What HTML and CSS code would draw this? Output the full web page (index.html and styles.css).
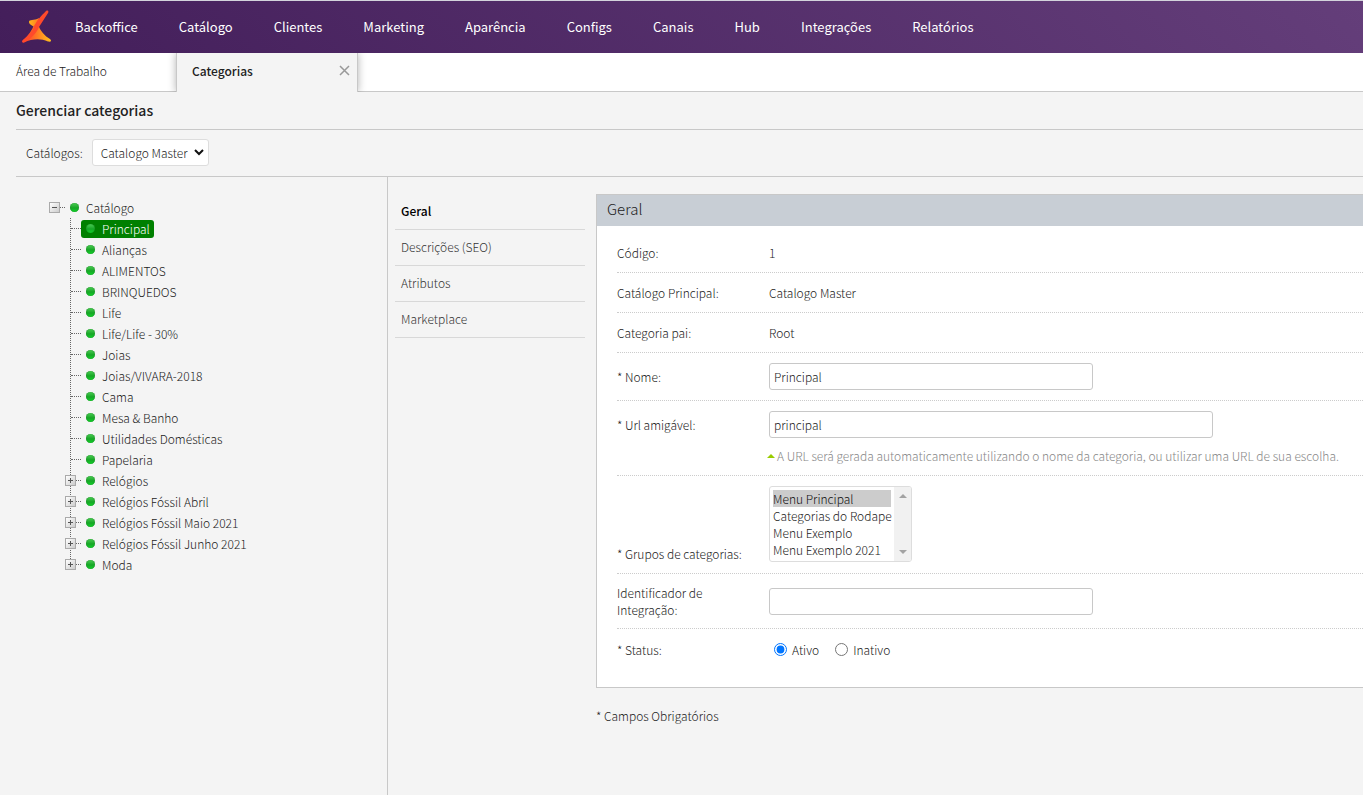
FILE: index.html
```
<!DOCTYPE html>
<html lang="pt-BR">
<head>
  <meta charset="UTF-8" />
  <meta name="viewport" content="width=device-width, initial-scale=1" />
  <title>Gerenciar categorias</title>
  <link rel="stylesheet" href="styles.css">
</head>
<body>
  <header class="topbar">
    <a href="#" class="logo" aria-label="Início">
      <svg width="30" height="34" viewBox="0 0 30 34" xmlns="http://www.w3.org/2000/svg">
        <defs>
          <linearGradient id="gBase" x1="0" y1="0" x2="1" y2="0">
            <stop offset="0" stop-color="#ff2f2f" />
            <stop offset="0.4" stop-color="#ff6a26" />
            <stop offset="1" stop-color="#ffc21c" />
          </linearGradient>
          <linearGradient id="gTop" x1="0" y1="0" x2="1" y2="0">
            <stop offset="0" stop-color="#ffb41c" />
            <stop offset="1" stop-color="#ff7a22" />
          </linearGradient>
        </defs>
        <path d="M7 12C7 9 12 11 17 8L15 19C12 16 7 15 7 12Z" fill="url(#gTop)" />
        <path d="M16 14C18 21 23 26 28 29C30 31 29 32 26 31.500C18 28 10 29 2 32.500C0 33 0 31 1 30C7 25 10 20 12 15Z" fill="url(#gBase)" />
        <path d="M24 1C26 0 27 1 26 3L17 17C15 22 10 28 2 32.500C0 33 -0.500 31 1 30C8 25 10 21 12 17C14 11 19 6 24 1Z" fill="#ff4a2b" />
      </svg>
    </a>
    <nav class="menu">
      <a href="#">Backoffice</a>
      <a href="#">Catálogo</a>
      <a href="#">Clientes</a>
      <a href="#">Marketing</a>
      <a href="#">Aparência</a>
      <a href="#">Configs</a>
      <a href="#">Canais</a>
      <a href="#">Hub</a>
      <a href="#">Integrações</a>
      <a href="#">Relatórios</a>
    </nav>
  </header>

  <div class="tabs">
    <a href="#" class="tab">Área de Trabalho</a>
    <div class="tab active">
      <a href="#">Categorias</a>
      <button type="button" class="tab-close" aria-label="Fechar">
        <svg width="11" height="11" viewBox="0 0 11 11"><path d="M1 1L10 10M10 1L1 10" /></svg>
      </button>
    </div>
  </div>

  <main class="page">
    <h1>Gerenciar categorias</h1>

    <div class="filter">
      <label for="catalogo">Catálogos:</label>
      <span class="select-wrap">
        <select id="catalogo">
          <option>Catalogo Master</option>
        </select>
        <svg class="chevron" width="10" height="7" viewBox="0 0 10 7"><path d="M1 1L5 5L9 1" /></svg>
      </span>
    </div>

    <div class="content">
      <aside class="sidebar">
        <div class="root">
          <button type="button" class="toggle minus" aria-label="Recolher"></button>
          <a href="#" class="node">Catálogo</a>
        </div>
        <ul class="tree">
          <li><a href="#" class="node selected">Principal</a></li>
          <li><a href="#" class="node">Alianças</a></li>
          <li><a href="#" class="node">ALIMENTOS</a></li>
          <li><a href="#" class="node">BRINQUEDOS</a></li>
          <li><a href="#" class="node">Life</a></li>
          <li><a href="#" class="node">Life/Life - 30%</a></li>
          <li><a href="#" class="node">Joias</a></li>
          <li><a href="#" class="node">Joias/VIVARA-2018</a></li>
          <li><a href="#" class="node">Cama</a></li>
          <li><a href="#" class="node">Mesa &amp; Banho</a></li>
          <li><a href="#" class="node">Utilidades Domésticas</a></li>
          <li><a href="#" class="node">Papelaria</a></li>
          <li><button type="button" class="toggle" aria-label="Expandir"></button><a href="#" class="node">Relógios</a></li>
          <li><button type="button" class="toggle" aria-label="Expandir"></button><a href="#" class="node">Relógios Fóssil Abril</a></li>
          <li><button type="button" class="toggle" aria-label="Expandir"></button><a href="#" class="node">Relógios Fóssil Maio 2021</a></li>
          <li><button type="button" class="toggle" aria-label="Expandir"></button><a href="#" class="node">Relógios Fóssil Junho 2021</a></li>
          <li><button type="button" class="toggle" aria-label="Expandir"></button><a href="#" class="node">Moda</a></li>
        </ul>
      </aside>

      <nav class="subnav">
        <a href="#" class="current">Geral</a>
        <a href="#">Descrições (SEO)</a>
        <a href="#">Atributos</a>
        <a href="#">Marketplace</a>
      </nav>

      <form class="form">
        <section class="panel">
          <h2>Geral</h2>
          <div class="rows">
            <div class="row">
              <span class="label">Código:</span>
              <span>1</span>
            </div>
            <div class="row">
              <span class="label">Catálogo Principal:</span>
              <span>Catalogo Master</span>
            </div>
            <div class="row">
              <span class="label">Categoria pai:</span>
              <span>Root</span>
            </div>
            <div class="row">
              <label class="label" for="nome">* Nome:</label>
              <input type="text" id="nome" class="text" value="Principal">
            </div>
            <div class="row top">
              <label class="label tall" for="url">* Url amigável:</label>
              <div>
                <input type="text" id="url" class="text wide" value="principal">
                <p class="hint">A URL será gerada automaticamente utilizando o nome da categoria, ou utilizar uma URL de sua escolha.</p>
              </div>
            </div>
            <div class="row bottom">
              <label class="label" for="grupos">* Grupos de categorias:</label>
              <span class="listbox-wrap">
                <select id="grupos" class="listbox" size="4" multiple>
                  <option selected>Menu Principal</option>
                  <option>Categorias do Rodape</option>
                  <option>Menu Exemplo</option>
                  <option>Menu Exemplo 2021</option>
                </select>
                <span class="scrollbar">
                  <svg width="8" height="4" viewBox="0 0 8 4"><path d="M0 4L4 0L8 4Z" /></svg>
                  <svg width="8" height="4" viewBox="0 0 8 4"><path d="M0 0L4 4L8 0Z" /></svg>
                </span>
              </span>
            </div>
            <div class="row">
              <label class="label" for="identificador">Identificador de Integração:</label>
              <input type="text" id="identificador" class="text">
            </div>
            <div class="row" role="radiogroup" aria-labelledby="statusLabel">
              <span class="label" id="statusLabel">* Status:</span>
              <div class="radios">
                <label><input type="radio" name="status" checked>Ativo</label>
                <label><input type="radio" name="status">Inativo</label>
              </div>
            </div>
          </div>
        </section>
        <p class="required">* Campos Obrigatórios</p>
      </form>
    </div>
  </main>
</body>
</html>
```
FILE: styles.css
```
* {
  box-sizing: border-box;
}
body {
  margin: 0;
  min-height: 100vh;
  display: flex;
  flex-direction: column;
  background-color: #f4f4f4;
  color: #222;
  font-family: "Noto Sans CJK SC", "Noto Sans", sans-serif;
  font-size: 12px;
  font-weight: 300;
  line-height: 17px;
}
a {
  color: inherit;
  text-decoration: none;
}
button,
input,
select {
  font: inherit;
  color: inherit;
}
h1,
h2,
p,
ul {
  margin: 0;
  padding: 0;
}

/* Top menu */
.topbar {
  display: flex;
  align-items: center;
  height: 53px;
  padding-left: 22px;
  border-top: 1px solid #d3d3dc;
  background: linear-gradient(45deg, #431e5a, #643e7a);
}
.logo {
  display: flex;
  margin-right: 23px;
}
.menu {
  display: flex;
  gap: 41px;
  padding-bottom: 2px;
  color: #fff;
  font-size: 13px;
  font-weight: 400;
}

/* Tabs */
.tabs {
  display: flex;
  height: 39px;
  background-color: #fff;
  border-bottom: 1px solid #c8c8c8;
}
.tab {
  display: flex;
  align-items: center;
  width: 176px;
  padding: 0 16px 3px;
}
.tab.active {
  width: 182px;
  height: 39px;
  padding: 0 7px 4px 15px;
  justify-content: space-between;
  background-color: #f4f4f4;
  border: solid #c8c8c8;
  border-width: 0 1px;
  box-shadow: 0 0 8px rgba(0, 0, 0, 0.3);
  clip-path: inset(0 -10px 0 -10px);
  font-weight: 500;
}
.tab-close {
  display: flex;
  padding: 0;
  border: 0;
  background: none;
  cursor: pointer;
}
.tab-close path {
  fill: none;
  stroke: #999;
  stroke-width: 1.5;
}

/* Page */
.page {
  flex: 1;
  display: flex;
  flex-direction: column;
  padding-left: 16px;
}
h1 {
  padding: 9px 0 10px;
  border-bottom: 1px solid #c8c8c8;
  font-size: 14px;
  font-weight: 500;
  line-height: 18px;
}
.filter {
  display: flex;
  align-items: center;
  gap: 9px;
  padding: 9px 10px 10px;
  border-bottom: 1px solid #c8c8c8;
}
.select-wrap {
  position: relative;
}
.select-wrap select {
  display: block;
  height: 27px;
  padding: 0 20px 0 8px;
  appearance: none;
  border: 1px solid #ddd;
  border-radius: 3px;
  background-color: #fff;
}
.chevron {
  position: absolute;
  top: 10px;
  right: 5px;
  pointer-events: none;
}
.chevron path {
  fill: none;
  stroke: #111;
  stroke-width: 2;
}
.content {
  flex: 1;
  display: flex;
}

/* Category tree */
.sidebar {
  flex: none;
  width: 372px;
  padding: 20px 0 0 33px;
  border-right: 1px solid #c8c8c8;
}
.root,
.tree li {
  display: flex;
  align-items: center;
  height: 21px;
}
.root::after {
  content: "";
  order: 1;
  width: 5px;
  border-top: 1px dotted #666;
}
.root .node {
  order: 2;
}
.tree {
  position: relative;
  padding-left: 16px;
  list-style: none;
}
.tree::before {
  content: "";
  position: absolute;
  top: 0;
  bottom: 10px;
  left: 21px;
  border-left: 1px dotted #666;
}
.tree li::before {
  content: "";
  width: 10px;
  margin-left: 6px;
  border-top: 1px dotted #666;
}
.tree li:has(.toggle)::before {
  order: 1;
  width: 5px;
  margin-left: 0;
}
.tree li .node {
  order: 2;
}
.toggle {
  position: relative;
  width: 11px;
  height: 11px;
  padding: 0;
  border: 1px solid #aaa;
  background:
    linear-gradient(#555, #555) center / 5px 1px no-repeat,
    linear-gradient(#555, #555) center / 1px 5px no-repeat,
    linear-gradient(135deg, #fff, #ccc);
}
.toggle.minus {
  background:
    linear-gradient(#555, #555) center / 5px 1px no-repeat,
    linear-gradient(135deg, #fff, #ccc);
}
.node {
  display: flex;
  align-items: center;
  gap: 7px;
  height: 18px;
  padding: 0 4px 1px 5px;
  border-radius: 3px;
}
.node::before {
  content: "";
  width: 9px;
  height: 9px;
  border-radius: 50%;
  background: linear-gradient(#4ccf55, #17a526 55%, #12d52a);
  box-shadow: inset 0 0 1px #0a6d14;
}
.node.selected {
  background-color: #008000;
  color: #fff;
}

/* Section links */
.subnav {
  flex: none;
  width: 190px;
  margin: 17px 11px 0 7px;
}
.subnav a {
  display: block;
  padding: 8px 6px 10px;
  border-bottom: 1px solid #d8d8d8;
  color: #333;
}
.subnav .current {
  color: #000;
  font-weight: 500;
}

/* Form */
.form {
  flex: 1;
  min-width: 0;
  padding-top: 17px;
}
.panel {
  border: 1px solid #c8c8c8;
  border-right: 0;
  background-color: #fff;
}
.panel h2 {
  padding: 5px 10px 8px;
  background-color: #c8ced5;
  font-size: 15px;
  font-weight: 300;
  line-height: 18px;
}
.rows {
  padding: 7px 0 18px 20px;
}
.row {
  display: grid;
  grid-template-columns: 132px 1fr;
  column-gap: 20px;
  align-items: center;
  justify-items: start;
  min-height: 40px;
  padding: 10px 0;
  border-bottom: 1px dotted #ccc;
}
.row:last-child {
  border-bottom: 0;
}
.row.top {
  align-items: start;
}
.row.bottom {
  align-items: end;
  padding-bottom: 11px;
}
.label.tall {
  line-height: 28px;
}
.text {
  display: block;
  width: 324px;
  height: 27px;
  padding: 0 4px 1px;
  border: 1px solid #c8c8c8;
  border-radius: 3px;
  background-color: #fff;
}
.text.wide {
  width: 444px;
}
.hint {
  display: flex;
  align-items: center;
  gap: 2px;
  margin: 9px 0 1px;
  color: #888;
}
.hint::before {
  content: "";
  margin-left: -2px;
  border: solid transparent;
  border-width: 0 4px 4px;
  border-bottom-color: #9c0;
}
.listbox-wrap {
  position: relative;
}
.listbox {
  display: block;
  width: 143px;
  height: 76px;
  padding: 3px 20px 3px 3px;
  border: 1px solid #ddd;
  border-radius: 3px;
  background-color: #fff;
  overflow: hidden;
}
.listbox option {
  padding: 0;
  font-weight: 300;
}
.listbox option:checked {
  background-color: #ccc;
}
.scrollbar {
  position: absolute;
  top: 1px;
  right: 1px;
  bottom: 1px;
  display: flex;
  flex-direction: column;
  align-items: center;
  justify-content: space-between;
  width: 17px;
  padding: 7px 0;
  border-radius: 0 2px 2px 0;
  background-color: #f1f1f1;
}
.scrollbar path {
  fill: #a3a3a3;
}
.radios {
  display: flex;
  gap: 16px;
  padding-left: 5px;
}
.radios label {
  display: flex;
  align-items: center;
  gap: 5px;
}
.radios input {
  width: 13px;
  height: 13px;
  margin: 0;
}
.required {
  margin-top: 19px;
}
```
